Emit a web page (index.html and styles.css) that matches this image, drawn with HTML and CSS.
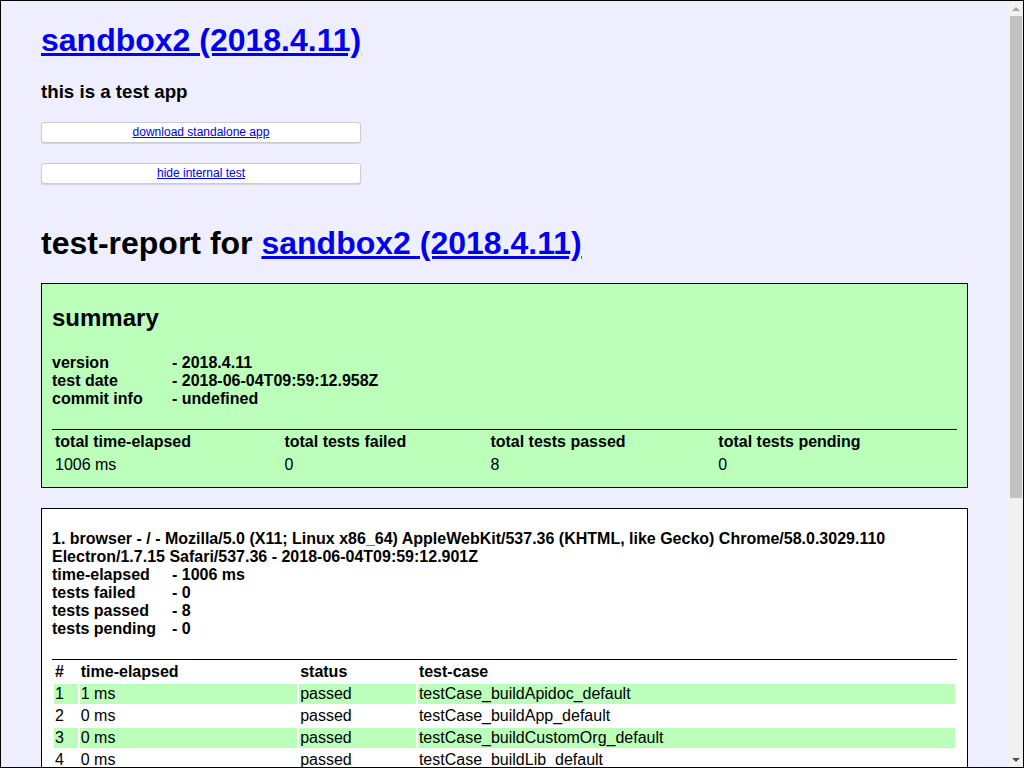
FILE: index.html
```html
<!DOCTYPE html>
<html>
<head>
<meta charset="utf-8">
<title>sandbox2 (2018.4.11)</title>
<link rel="stylesheet" href="styles.css">
</head>
<body>
<div class="frame">
  <div class="page">
    <h1><a href="#">sandbox2 (2018.4.11)</a></h1>
    <h3>this is a test app</h3>
    <div class="btn"><a href="#">download standalone app</a></div>
    <div class="btn"><a href="#">hide internal test</a></div>
    <div class="testReportDiv">
      <h1>test-report for <a href="#">sandbox2 (2018.4.11)</a></h1>
      <div class="platform summary">
        <h2>summary</h2>
        <h4>
          <span class="lbl">version</span>- 2018.4.11<br>
          <span class="lbl">test date</span>- 2018-06-04T09:59:12.958Z<br>
          <span class="lbl">commit info</span>- undefined
        </h4>
        <table>
          <thead>
            <tr><th>total time-elapsed</th><th>total tests failed</th><th>total tests passed</th><th>total tests pending</th></tr>
          </thead>
          <tbody>
            <tr><td>1006 ms</td><td>0</td><td>8</td><td>0</td></tr>
          </tbody>
        </table>
      </div>
      <div class="platform">
        <h4>
          1. browser - / - Mozilla/5.0 (X11; Linux x86_64) AppleWebKit/537.36 (KHTML, like Gecko) Chrome/58.0.3029.110 Electron/1.7.15 Safari/537.36 - 2018-06-04T09:59:12.901Z<br>
          <span class="lbl">time-elapsed</span>- 1006 ms<br>
          <span class="lbl">tests failed</span>- 0<br>
          <span class="lbl">tests passed</span>- 8<br>
          <span class="lbl">tests pending</span>- 0
        </h4>
        <table>
          <thead>
            <tr><th>#</th><th>time-elapsed</th><th>status</th><th>test-case</th></tr>
          </thead>
          <tbody>
            <tr><td>1</td><td>1 ms</td><td>passed</td><td>testCase_buildApidoc_default</td></tr>
            <tr><td>2</td><td>0 ms</td><td>passed</td><td>testCase_buildApp_default</td></tr>
            <tr><td>3</td><td>0 ms</td><td>passed</td><td>testCase_buildCustomOrg_default</td></tr>
            <tr><td>4</td><td>0 ms</td><td>passed</td><td>testCase_buildLib_default</td></tr>
          </tbody>
        </table>
      </div>
    </div>
  </div>
  <div class="scrollbar">
    <div class="arrow up"></div>
    <div class="thumb"></div>
    <div class="track"></div>
    <div class="arrow down"></div>
  </div>
</div>
</body>
</html>
```
FILE: styles.css
```css
html, body {
  margin: 0;
  padding: 0;
}
body {
  font-family: "Liberation Sans", Arial, sans-serif;
  font-size: 16px;
  color: #000;
  background: #fff;
}
.frame {
  box-sizing: border-box;
  width: 1024px;
  height: 768px;
  border: 1px solid #000;
  display: flex;
  overflow: hidden;
}
.page {
  flex: 1;
  min-width: 0;
  background: #eef;
  padding: 0 40px;
  overflow: hidden;
  display: flow-root;
}
a {
  color: #00e;
}
h1 {
  font-size: 32px;
  margin: 21.44px 0;
}
h3 {
  font-size: 18.72px;
  margin: 18.72px 0;
}
.btn {
  box-sizing: border-box;
  width: 320px;
  height: 21px;
  margin-bottom: 20px;
  background: #fff;
  border: 1px solid #ccc;
  border-radius: 3px;
  box-shadow: 0 1px 1px rgba(0, 0, 0, 0.12);
  text-align: center;
  font-size: 12px;
  line-height: 18px;
}
.testReportDiv {
  display: flow-root;
}
.testReportDiv h1 {
  margin: 21.44px 0;
}
.platform {
  background: #fff;
  border: 1px solid #000;
  margin-bottom: 20px;
  padding: 0 10px 10px 10px;
}
.summary {
  background: #bfb;
}
.platform h2 {
  font-size: 24px;
  margin: 19.92px 0;
}
.platform h4 {
  font-size: 16px;
  margin: 21.28px 0;
}
.lbl {
  display: inline-block;
  width: 120px;
}
table {
  width: 100%;
  border-top: 1px solid #000;
  border-spacing: 2px;
  text-align: left;
  font-size: 16px;
}
th, td {
  padding: 1px;
}
th {
  font-weight: bold;
}
.summary th {
  padding-bottom: 2px;
}
tbody tr:nth-child(odd) {
  background: #bfb;
}
.scrollbar {
  width: 15px;
  flex: none;
  background: #f1f1f1;
  display: flex;
  flex-direction: column;
}
.arrow {
  height: 15px;
  flex: none;
  display: flex;
  align-items: center;
  justify-content: center;
}
.arrow::after {
  content: "";
  width: 0;
  height: 0;
  border-left: 4px solid transparent;
  border-right: 4px solid transparent;
}
.arrow.up::after {
  border-bottom: 4px solid #a3a3a3;
}
.arrow.down::after {
  border-top: 4px solid #505050;
}
.thumb {
  height: 482px;
  margin: 0 1px 0 2px;
  background: #c1c1c1;
  flex: none;
}
.track {
  flex: 1;
}
```
